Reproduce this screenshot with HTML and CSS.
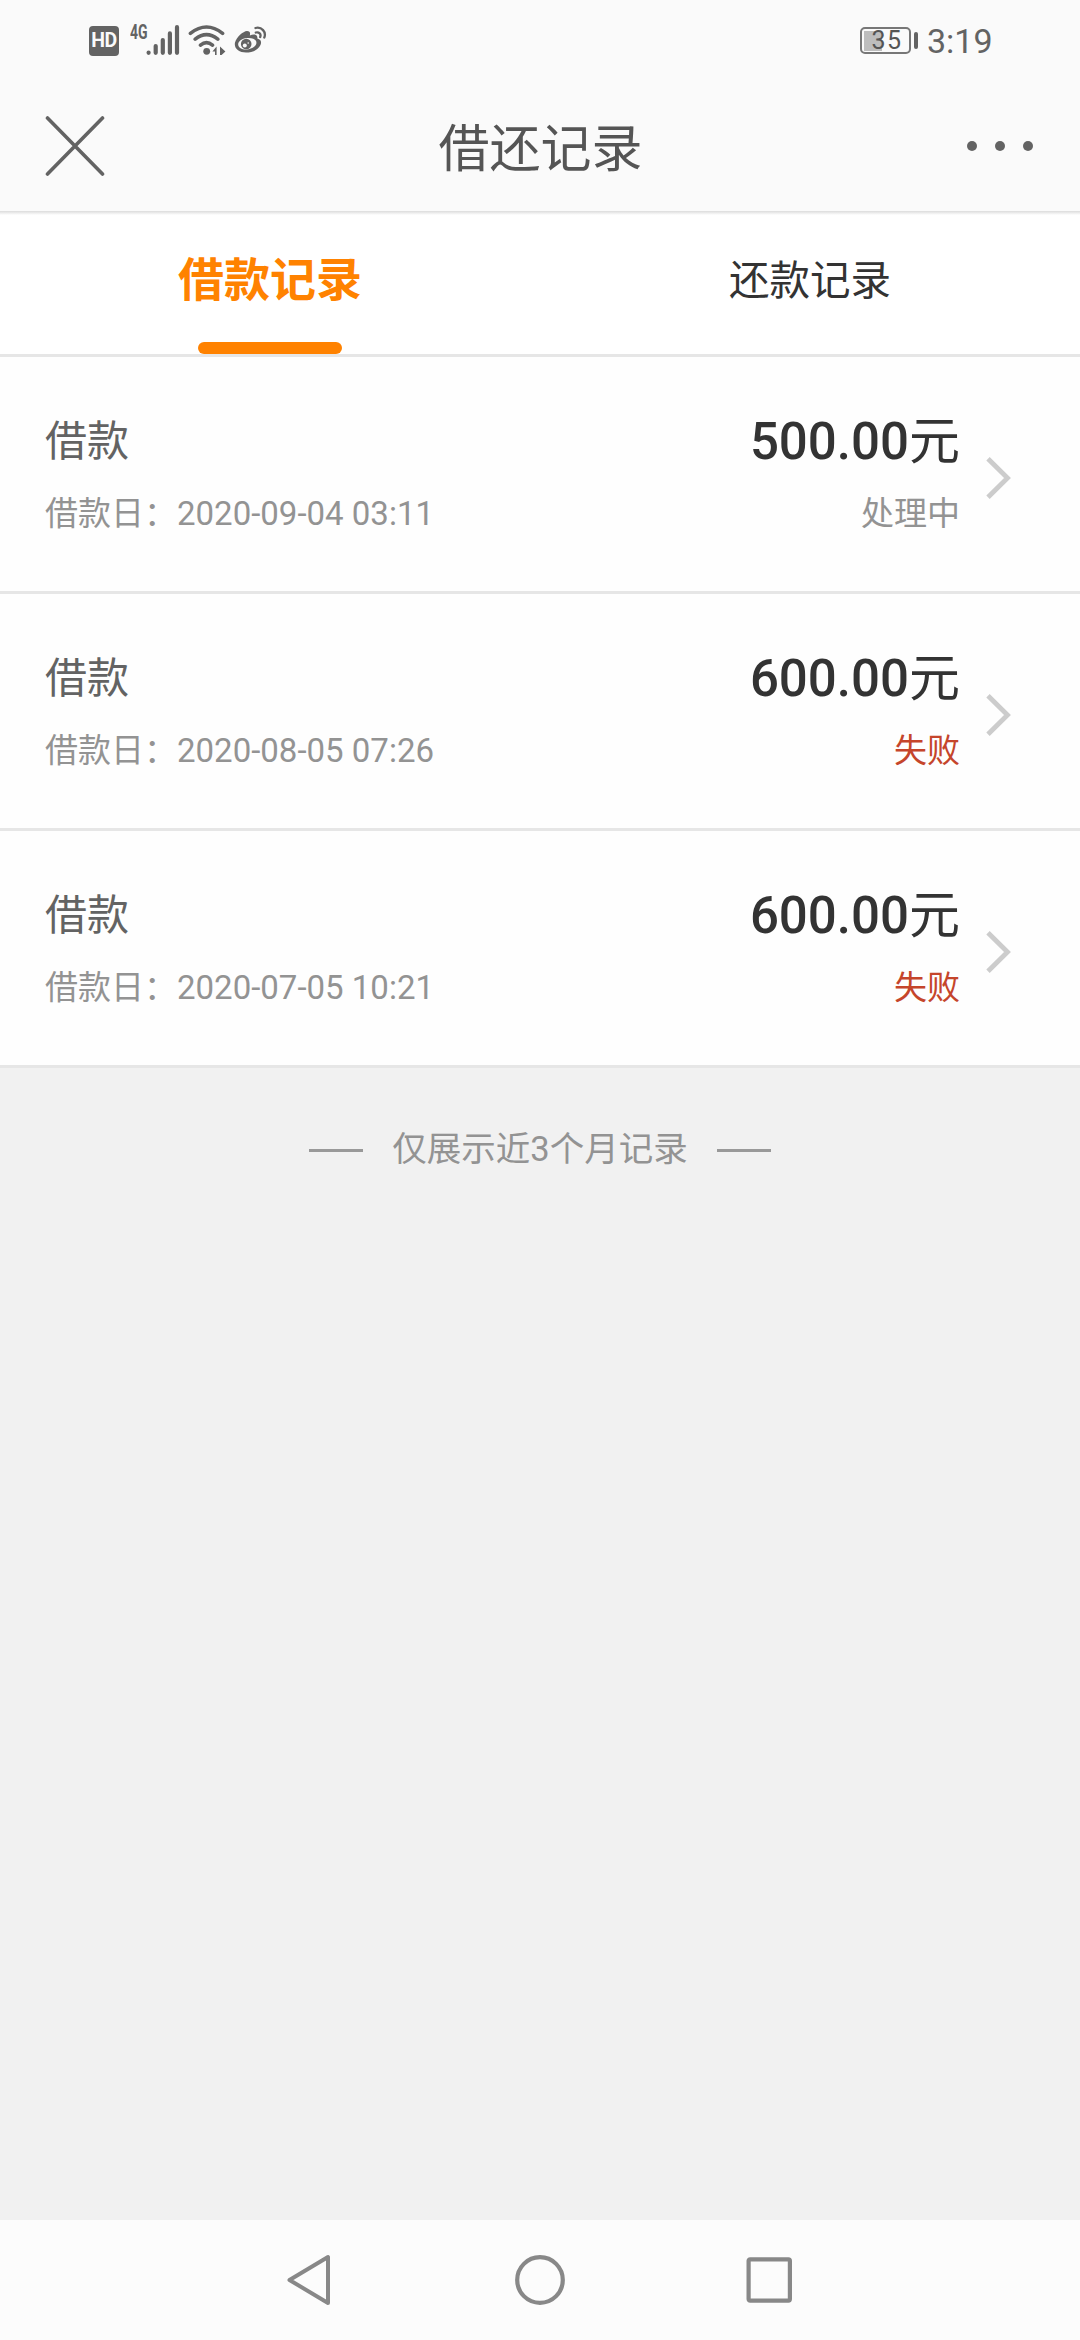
FILE: index.html
```html
<!DOCTYPE html>
<html lang="zh-CN">
<head>
<meta charset="utf-8">
<title>借还记录</title>
<link rel="stylesheet" href="styles.css">
</head>
<body>
<div class="screen">
  <div class="status-bar">
    <div class="status-icons">
      <span class="hd">HD</span>
      <span class="network">4G</span>
      <svg class="signal" width="34" height="32" viewBox="0 0 34 32" fill="none" stroke="#636363" stroke-width="4.2" stroke-linecap="round">
        <path d="M2.6 28.6v.2M9.7 22v6.8M16.8 16v12.8M23.9 9.4v19.4M31 3.2v25.6"/>
      </svg>
      <svg class="wifi" width="38" height="32" viewBox="0 0 38 32">
        <g fill="none" stroke="#636363" stroke-width="3.6" stroke-linecap="round">
          <path d="M2.4 9.3Q18.5-3.3 34.6 9.3M7.2 15.2Q18.5 6.2 29.8 15.2M12.5 21.2Q18.5 16.2 24.5 21.2"/>
        </g>
        <circle cx="18.7" cy="27.3" r="3.4" fill="#636363"/>
        <path d="M24.4 27.6L28.6 22.6V31H27V27.6zM32 22.6L37.4 27.4L33.600 31H32z" fill="#636363"/>
      </svg>
      <svg class="weibo" width="34" height="30" viewBox="0 0 34 30">
        <path fill="#636363" fill-rule="evenodd" d="M2 17.5C3.5 12 10 6.3 14 6c3 0 3.5 2 2.8 4.6C20 9 25 8.600 24.3 13.500C28 14.500 29 17 27.200 20.500C24.500 25.500 18.500 27.500 13 27.500C6 27.500.7 23.500 2 17.500zM14 13C8.500 13.500 5 16.500 5.200 19.800C5.500 23.200 9.500 24.900 14 24.500C19.500 24 23.600 21 23.400 17.500C23.200 14.200 19 12.500 14 13z"/>
        <circle cx="13.200" cy="19" r="5.300" fill="#636363"/>
        <circle cx="11.800" cy="20.600" r="2" fill="#fafafa"/>
        <circle cx="15.200" cy="18" r=".8" fill="#fafafa"/>
        <path fill="none" stroke="#636363" stroke-width="2.300" stroke-linecap="round" d="M22.500 3C28.700 1.500 33.500 7 31.300 12.500M22.800 7.500C26 6.700 28.400 9 27.200 12"/>
      </svg>
    </div>
    <div class="status-right">
      <div class="battery"><span class="battery-level"></span><span class="battery-text">35</span></div>
      <span class="battery-cap"></span>
      <span class="clock">3:19</span>
    </div>
  </div>

  <header class="header">
    <svg width="60" height="60" viewBox="0 0 60 60" fill="none" stroke="#636363" stroke-width="3.600" stroke-linecap="round">
      <path d="M2.500 2L57.500 58M57.500 2L2.500 58"/>
    </svg>
    <h1 class="title">借还记录</h1>
    <svg class="more" width="68" height="12" viewBox="0 0 68 12" fill="#636363">
      <circle cx="6" cy="6" r="5"/><circle cx="34" cy="6" r="5"/><circle cx="62" cy="6" r="5"/>
    </svg>
  </header>

  <nav class="tabs">
    <div class="tab tab-active">借款记录</div>
    <div class="tab">还款记录</div>
  </nav>

  <main class="records">
    <section class="record">
      <div class="info">
        <div class="name">借款</div>
        <div class="date">借款日：2020-09-04 03:11</div>
      </div>
      <div class="result">
        <div class="amount">500.00<span class="unit">元</span></div>
        <div class="state">处理中</div>
      </div>
      <svg class="chevron" width="26" height="42" viewBox="0 0 26 42" fill="none" stroke="#ccc" stroke-width="4.800"><path d="M2 1.800L21.500 21L2 40.200"/></svg>
    </section>
    <section class="record">
      <div class="info">
        <div class="name">借款</div>
        <div class="date">借款日：2020-08-05 07:26</div>
      </div>
      <div class="result">
        <div class="amount">600.00<span class="unit">元</span></div>
        <div class="state failed">失败</div>
      </div>
      <svg class="chevron" width="26" height="42" viewBox="0 0 26 42" fill="none" stroke="#ccc" stroke-width="4.800"><path d="M2 1.800L21.500 21L2 40.200"/></svg>
    </section>
    <section class="record">
      <div class="info">
        <div class="name">借款</div>
        <div class="date">借款日：2020-07-05 10:21</div>
      </div>
      <div class="result">
        <div class="amount">600.00<span class="unit">元</span></div>
        <div class="state failed">失败</div>
      </div>
      <svg class="chevron" width="26" height="42" viewBox="0 0 26 42" fill="none" stroke="#ccc" stroke-width="4.800"><path d="M2 1.800L21.500 21L2 40.200"/></svg>
    </section>
  </main>

  <p class="note">仅展示近3个月记录</p>

  <footer class="system-nav">
    <svg width="50" height="54" viewBox="0 0 50 54" fill="none" stroke="#888" stroke-width="4" stroke-linejoin="round"><path d="M3.500 27L42 4V50z"/></svg>
    <svg width="54" height="54" viewBox="0 0 54 54" fill="none" stroke="#888" stroke-width="4.200"><circle cx="27" cy="27" r="22.800"/></svg>
    <svg width="50" height="54" viewBox="0 0 50 54" fill="none" stroke="#888" stroke-width="4.200"><rect x="4.600" y="6.300" width="41.300" height="41.300" rx="1.500"/></svg>
  </footer>
</div>
</body>
</html>
```
FILE: styles.css
```css
* { box-sizing: border-box; }

body {
  margin: 0;
  background: #f1f1f1;
  font-family: Roboto, "Noto Sans CJK SC", sans-serif;
}

svg { display: block; flex: none; }

.screen {
  display: flex;
  flex-direction: column;
  width: 1080px;
  height: 2340px;
}

.status-bar {
  display: flex;
  justify-content: space-between;
  height: 82px;
  padding: 24px 90px 0 89px;
  background: #fafafa;
  color: #636363;
}

.status-icons,
.status-right { display: flex; align-items: flex-start; }

.hd {
  width: 30px;
  height: 30px;
  margin-top: 2px;
  border-radius: 4px;
  background: #636363;
  color: #fafafa;
  font-size: 19.5px;
  font-weight: 700;
  line-height: 30px;
  text-align: center;
  letter-spacing: -0.5px;
}

.network {
  width: 17px;
  margin-left: 11px;
  font-size: 20px;
  font-weight: 700;
  line-height: 17px;
  white-space: nowrap;
  transform: scaleX(0.7);
  transform-origin: left;
}

.signal { margin-left: -1px; }
.wifi { margin-left: 8px; }
.weibo { margin: 1px 0 0 7px; }

.battery {
  display: grid;
  align-items: center;
  width: 51px;
  height: 27px;
  margin-top: 3px;
  border: 2px solid #777;
  border-radius: 5px;
}

.battery-level,
.battery-text { grid-area: 1 / 1; }

.battery-level {
  width: 18px;
  height: 20px;
  margin-left: 2px;
  background: #bdbdbd;
}

.battery-text {
  padding-left: 3px;
  font-size: 25px;
  line-height: 23px;
  letter-spacing: 1.5px;
  text-align: center;
  color: #555;
}

.battery-cap {
  width: 4px;
  height: 17px;
  margin: 8px 9px 0 3px;
  border-radius: 2px;
  background: #636363;
}

.clock { width: 63px; font-size: 34px; line-height: 34px; white-space: nowrap; }

.header {
  display: flex;
  justify-content: space-between;
  height: 129px;
  padding: 34px 46px 0 45px;
  background: #fafafa;
}

.title {
  margin: 0;
  color: #555;
  font-size: 51px;
  font-weight: 400;
  line-height: 68px;
  transform: translateX(5px);
}

.more { margin-top: 24px; }

.tabs {
  display: flex;
  height: 146px;
  border-bottom: 3px solid #e6e6e6;
  background: linear-gradient(#dcdcdc, #ededed 2px, #fff 4px);
}

.tab {
  display: flex;
  flex: 1;
  flex-direction: column;
  align-items: center;
  padding-top: 40px;
  color: #333;
  font-size: 40.5px;
  line-height: 60px;
}

.tab-active {
  justify-content: space-between;
  padding-top: 39px;
  color: #ff8200;
  font-size: 46px;
  font-weight: 700;
}

.tab-active::after {
  content: "";
  width: 144px;
  height: 12px;
  border-radius: 6px;
  background: #ff8200;
}

.record {
  display: flex;
  height: 237px;
  padding: 55px 68px 0 45px;
  border-bottom: 3px solid #e6e6e6;
  background: #fefefe;
}

.info { flex: 1; }

.name {
  height: 77px;
  color: #636363;
  font-size: 42px;
  line-height: 60px;
}

.date,
.state {
  color: #939393;
  font-size: 33px;
  line-height: 49px;
}

.result { text-align: right; }

.amount {
  height: 77px;
  color: #333;
  font-size: 51px;
  font-weight: 500;
  line-height: 60px;
}

.unit { font-weight: 400; }
.failed { color: #c5452b; }
.chevron { margin: 45px 0 0 26px; }

.note {
  display: flex;
  align-items: center;
  justify-content: center;
  gap: 29px;
  margin: 57px 0 0;
  color: #939393;
  font-size: 34.5px;
  line-height: 48px;
}

.note::before,
.note::after {
  content: "";
  width: 54px;
  height: 3px;
  margin-top: 3px;
  background: #999;
}

.system-nav {
  display: flex;
  justify-content: center;
  gap: 177px;
  height: 120px;
  margin-top: auto;
  padding-top: 33px;
  background: #fcfcfc;
}
```
